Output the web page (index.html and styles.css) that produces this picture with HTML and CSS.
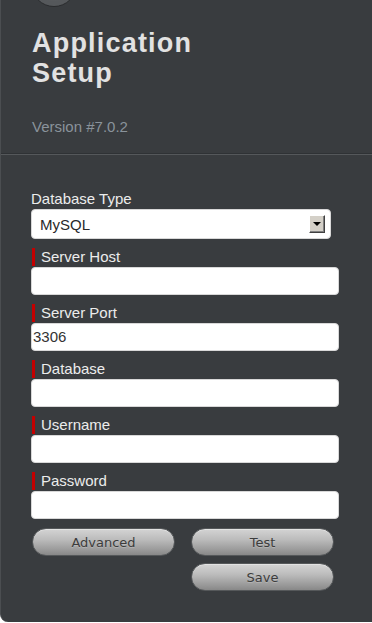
FILE: index.html
```html
<!DOCTYPE html>
<html>
<head>
<meta charset="utf-8">
<link rel="stylesheet" href="styles.css">
</head>
<body>
<div class="panel">
  <div class="header">
    <div class="logo"></div>
    <h1 class="title">Application<br>Setup</h1>
    <div class="version">Version #7.0.2</div>
  </div>
  <div class="divider"></div>
  <form class="form">
    <div class="plain-label">Database Type</div>
    <div class="select">
      <span class="select-value">MySQL</span>
      <span class="select-btn"><span class="tri"></span></span>
    </div>
    <label class="label">Server Host</label>
    <div class="input"></div>
    <label class="label">Server Port</label>
    <div class="input">3306</div>
    <label class="label">Database</label>
    <div class="input"></div>
    <label class="label">Username</label>
    <div class="input"></div>
    <label class="label">Password</label>
    <div class="input"></div>
    <div class="buttons">
      <button type="button" class="btn">Advanced</button>
      <button type="button" class="btn">Test</button>
      <button type="button" class="btn btn-save">Save</button>
    </div>
  </form>
</div>
</body>
</html>
```
FILE: styles.css
```css
html, body {
  margin: 0;
  padding: 0;
  background: #ffffff;
}
body {
  font-family: "Liberation Sans", Arial, sans-serif;
  overflow: hidden;
}
.panel {
  width: 372px;
  height: 622px;
  box-sizing: border-box;
  background: #393c3f;
  border-left: 1px solid #4b4e51;
  border-bottom-left-radius: 8px;
  overflow: hidden;
}
.header {
  padding-left: 31px;
}
.logo {
  width: 46px;
  height: 46px;
  margin-top: -39px;
  margin-left: -1px;
  box-sizing: border-box;
  border-radius: 50%;
  border: 1px solid #2a2c2e;
  background: radial-gradient(circle at 50% 30%, #707275, #55585b 70%);
}
.title {
  margin: 21px 0 0 0;
  font-size: 27px;
  line-height: 30px;
  font-weight: bold;
  letter-spacing: 1.2px;
  color: #e2e2e2;
}
.version {
  margin-top: 30px;
  font-size: 15px;
  line-height: 18px;
  color: #8a939b;
}
.divider {
  margin-top: 17px;
  height: 1px;
  border-top: 1px solid #2f3235;
  background: #55585b;
}
.form {
  margin: 0;
  padding: 35px 0 0 30px;
  display: flex;
  flex-direction: column;
  align-items: flex-start;
}
.plain-label {
  font-size: 15px;
  line-height: 18px;
  color: #ececec;
}
.select {
  margin-top: 1px;
  width: 300px;
  height: 30px;
  box-sizing: border-box;
  background: #ffffff;
  border-radius: 4px;
  border: 1px solid #d8d8d8;
  display: flex;
  align-items: center;
  justify-content: space-between;
  padding: 0 5px 0 8px;
}
.select-value {
  font-size: 15px;
  color: #2a2a2a;
}
.select-btn {
  width: 16px;
  height: 18px;
  box-sizing: border-box;
  background: #d4d0c8;
  border-top: 1px solid #ffffff;
  border-left: 1px solid #ffffff;
  border-right: 1px solid #404040;
  border-bottom: 1px solid #404040;
  box-shadow: inset -1px -1px 0 #808080;
  display: flex;
  align-items: center;
  justify-content: center;
}
.tri {
  width: 0;
  height: 0;
  border-left: 4px solid transparent;
  border-right: 4px solid transparent;
  border-top: 4px solid #000;
}
.label {
  margin-top: 9px;
  margin-left: 1px;
  display: block;
  border-left: 3px solid #c40000;
  padding-left: 6px;
  font-size: 15px;
  line-height: 18px;
  color: #ececec;
}
.input {
  margin-top: 1px;
  width: 308px;
  height: 28px;
  box-sizing: border-box;
  background: #ffffff;
  border-radius: 4px;
  border: 1px solid #d8d8d8;
  padding: 0 1px;
  font-size: 15px;
  line-height: 26px;
  color: #333333;
}
.buttons {
  margin-top: 9px;
  margin-left: 1px;
  display: grid;
  grid-template-columns: 143px 143px;
  column-gap: 16px;
  row-gap: 7px;
}
.btn {
  height: 28px;
  margin: 0;
  padding: 0;
  border: 1px solid #55585a;
  border-radius: 14px;
  background: linear-gradient(to bottom, #d4d4d4 0%, #bcbcbc 40%, #9a9a9a 80%, #888888 100%);
  box-shadow: inset 0 1px 0 rgba(255,255,255,0.35);
  font-family: "DejaVu Sans", Verdana, sans-serif;
  font-size: 13px;
  color: #3c3c3c;
  text-shadow: 0 1px 0 rgba(255,255,255,0.2);
}
.btn-save {
  grid-column: 2;
}
```
